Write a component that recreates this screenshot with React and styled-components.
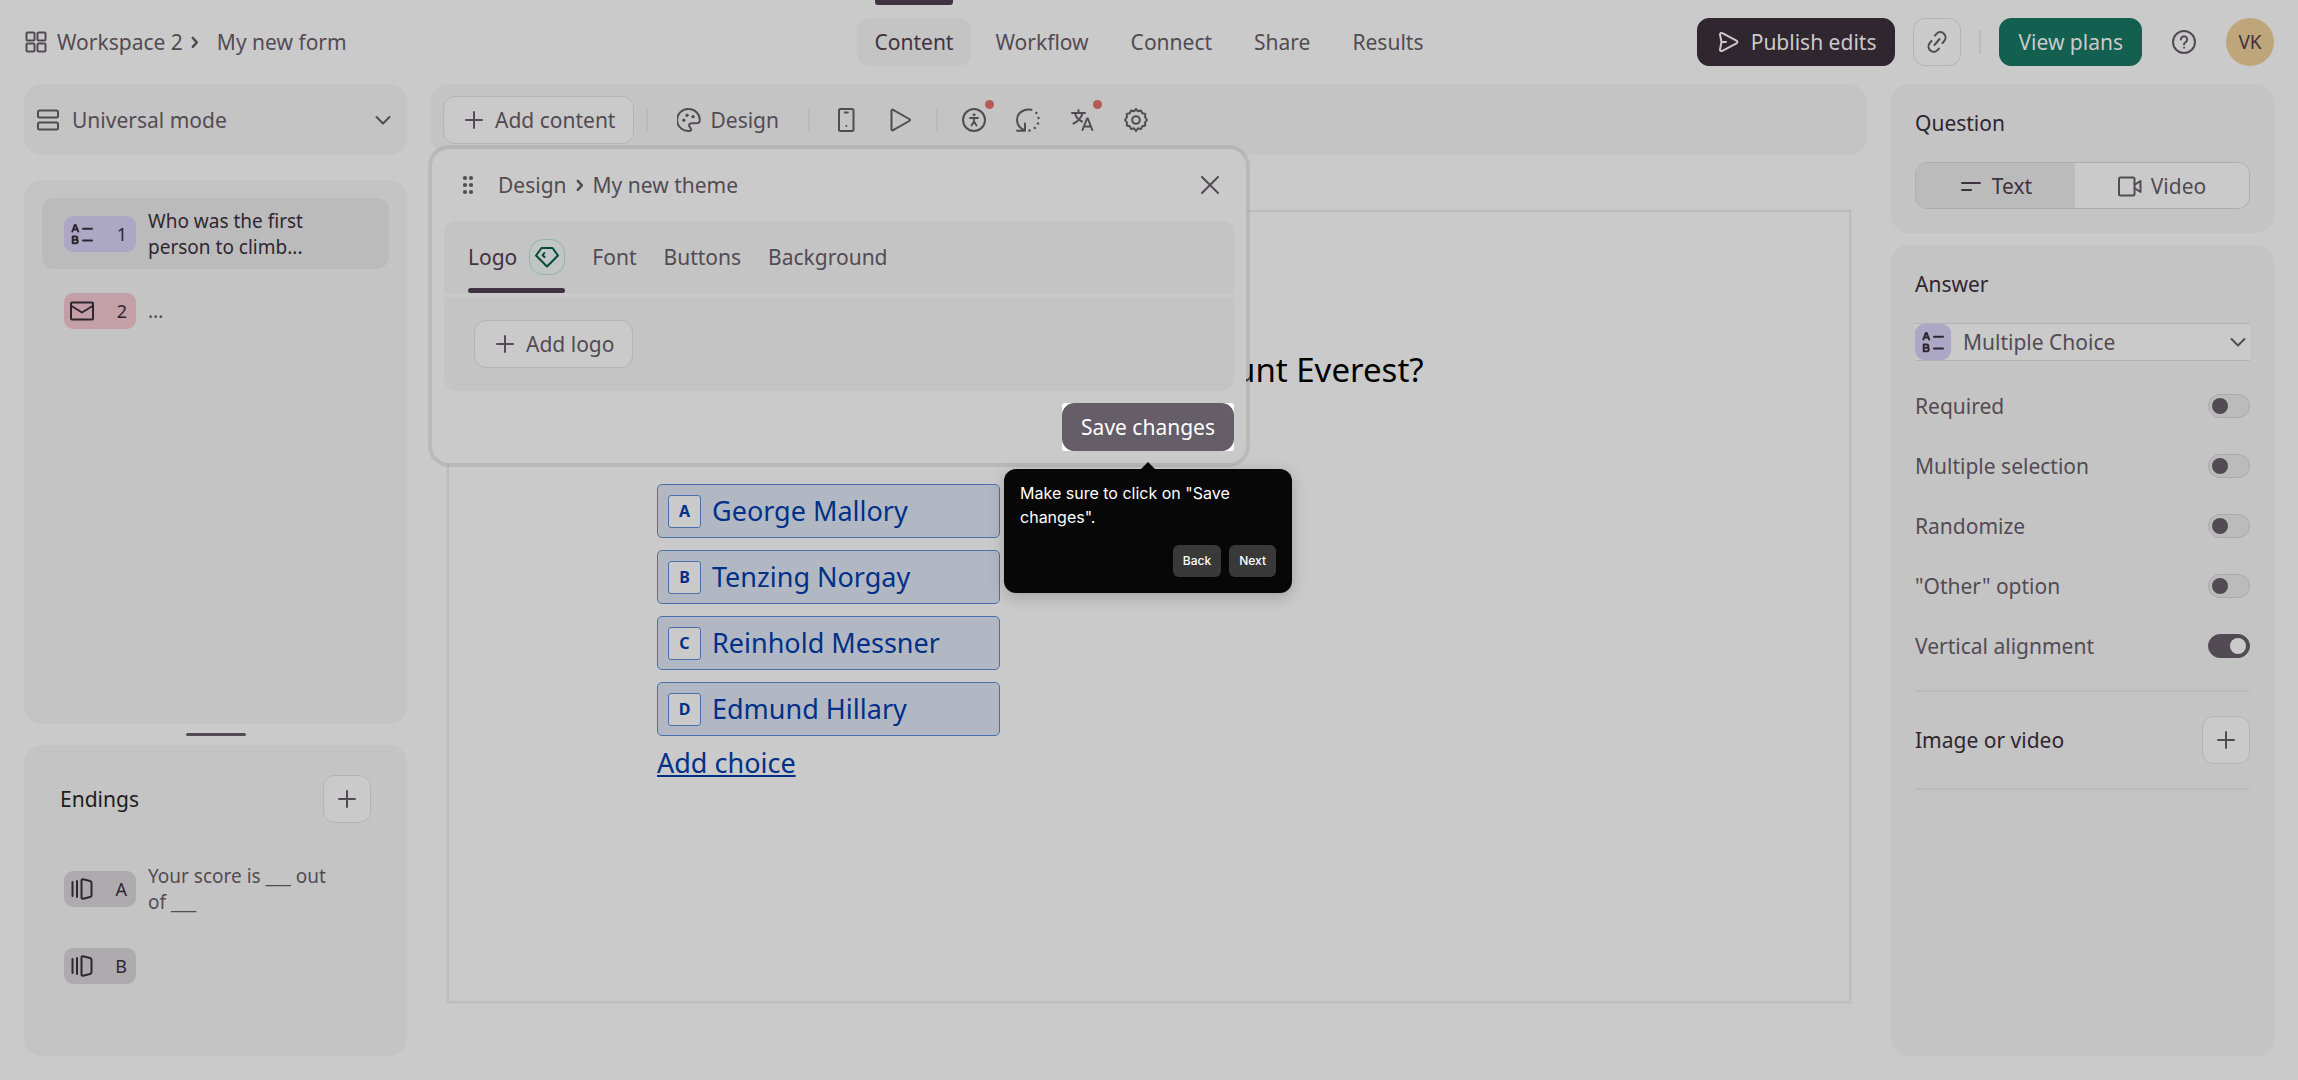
import React, { useState } from 'react'
import styled, { createGlobalStyle, css } from 'styled-components'

const colors = {
  page: '#cacaca',
  panel: '#c4c4c4',
  active: '#bbbbbb',
  line: '#b4b4b4',
  softLine: '#bbbbbb',
  text: '#534b54',
  dark: '#2f2630',
  strong: '#3f3241',
  blue: '#003087',
  blueLine: '#4c70ab',
}

const modes = ['Universal mode', 'Logic mode']
const answerTypes = ['Multiple Choice', 'Short Text', 'Email']
const navItems = ['Content', 'Workflow', 'Connect', 'Share', 'Results']
const choices = ['George Mallory', 'Tenzing Norgay', 'Reinhold Messner', 'Edmund Hillary']
const settings = [
  { id: 'required', label: 'Required', on: false },
  { id: 'multiple', label: 'Multiple selection', on: false },
  { id: 'randomize', label: 'Randomize', on: false },
  { id: 'other', label: '"Other" option', on: false },
  { id: 'vertical', label: 'Vertical alignment', on: true },
]

const Icon = ({ children, size = 24, width = 2 }) => (
  <Svg
    width={size}
    height={size}
    viewBox="0 0 24 24"
    fill="none"
    stroke="currentColor"
    strokeWidth={width}
    strokeLinecap="round"
    strokeLinejoin="round"
    aria-hidden="true"
  >
    {children}
  </Svg>
)

const GridIcon = () => (
  <Icon>
    <rect x="2.5" y="2.5" width="8" height="8" rx="1" />
    <rect x="13.5" y="2.5" width="8" height="8" rx="1" />
    <rect x="2.5" y="13.5" width="8" height="8" rx="1" />
    <rect x="13.5" y="13.5" width="8" height="8" rx="1" />
  </Icon>
)
const RowsIcon = () => (
  <Icon>
    <rect x="2" y="2.5" width="20" height="7" rx="1.5" />
    <rect x="2" y="14.5" width="20" height="7" rx="1.5" />
  </Icon>
)
const ChevronRight = () => (
  <Icon size={18} width={3.2}>
    <path d="M9 6.500l5.500 6-5.500 6" />
  </Icon>
)
const ChevronDown = () => (
  <Icon>
    <path d="M5.500 9l6.500 6.500L18.500 9" />
  </Icon>
)
const PlusIcon = () => (
  <Icon>
    <path d="M12 4v16M4 12h16" />
  </Icon>
)
const CloseIcon = () => (
  <Icon>
    <path d="M4 4l16 16M20 4L4 20" />
  </Icon>
)
const ChoiceIcon = () => (
  <Icon>
    <path d="M2.300 9.500L4.800 3h.9l2.500 6.500M3.400 7.600h3.700" />
    <path d="M2.700 14.500h3a1.500 1.500 0 0 1 0 3.300h-3zM2.700 17.800h3.400a1.600 1.600 0 0 1 0 3.400H2.700z" />
    <path d="M13 6.700h9M13 18.500h9" />
  </Icon>
)
const MailIcon = () => (
  <Icon>
    <rect x="1" y="3.500" width="22" height="17" rx="1" />
    <path d="M1.500 7L12 13.500 22.500 7" />
  </Icon>
)
const EndingIcon = () => (
  <Icon>
    <path d="M2.500 5v14M7 4v16M11.500 3.500c0-1 .5-1.400 1.500-1.200l7 1.700c1 .2 1.500.8 1.500 1.700v12.600c0 .9-.5 1.500-1.500 1.700l-7 1.700c-1 .2-1.500-.2-1.500-1.200z" />
  </Icon>
)
const SendIcon = () => (
  <Icon>
    <path d="M4 4.500c0-1.500 1-2 2.300-1.300l14.200 7.500c1.200.6 1.200 2 0 2.600L6.300 20.800C5 21.500 4 21 4 19.500L5.500 12zM5.500 12H10" />
  </Icon>
)
const LinkIcon = () => (
  <Icon>
    <path d="M10 5.500l1.500-1.700a5 5 0 0 1 7.500 0 5.500 5.500 0 0 1 0 7.500L17.500 13M6.500 11L5 12.700a5.500 5.500 0 0 0 0 7.500 5 5 0 0 0 7.500 0l1.500-1.700M9.500 15l5-6" />
  </Icon>
)
const HelpIcon = () => (
  <Icon>
    <circle cx="12" cy="12" r="11" />
    <path d="M8.800 9.500a3.200 3.200 0 1 1 5 2.700c-1.200.8-1.800 1.200-1.800 2.300" />
    <circle cx="12" cy="17.700" r=".6" fill="currentColor" strokeWidth="1" />
  </Icon>
)
const PaletteIcon = () => (
  <Icon>
    <path d="M12 1a11 11 0 1 0 1.500 21.700c1-.4.700-1.400.2-2.100l-1.200-2c-1-1.700-.2-3.300 1.800-3.300h4.900c2 0 3.600-1.200 3.600-3.600A11 11 0 0 0 12 1z" />
    <g fill="currentColor" strokeWidth="1">
      <circle cx="6.800" cy="12.300" r="1.200" />
      <circle cx="10" cy="7.300" r="1.200" />
      <circle cx="16" cy="8.700" r="1.200" />
    </g>
  </Icon>
)
const PhoneIcon = () => (
  <Icon>
    <rect x="5" y="1" width="14.500" height="22" rx="1.500" />
    <path d="M10.800 4.500h3" />
    <circle cx="12.200" cy="18" r=".5" fill="currentColor" strokeWidth="1" />
  </Icon>
)
const PlayIcon = () => (
  <Icon>
    <path d="M3.500 2.800c0-1 .8-1.500 1.700-1l16 9.200c1 .5 1 1.500 0 2l-16 9.200c-.9.500-1.700 0-1.700-1z" />
  </Icon>
)
const AccessIcon = () => (
  <Icon>
    <circle cx="12" cy="12" r="11" />
    <circle cx="12" cy="6.800" r="1" fill="currentColor" strokeWidth="1" />
    <path d="M8 10h8M12 10v4M12 13.500L9.500 17.500M12 13.500l2.500 4" strokeWidth="1.800" />
  </Icon>
)
const ReplayIcon = () => (
  <Icon>
    <path d="M15.500 1.800C8 .2 1 5 1 12c0 4.500 2.500 8 8 10.500M9 15.500v7.200H1" />
    <g fill="currentColor" stroke="none">
      <circle cx="20.300" cy="5" r="1.200" />
      <circle cx="22.500" cy="10" r="1.200" />
      <circle cx="22" cy="15.500" r="1.200" />
      <circle cx="18.800" cy="20" r="1.200" />
      <circle cx="13.500" cy="22.500" r="1.200" />
    </g>
  </Icon>
)
const TranslateIcon = () => (
  <Icon>
    <path d="M2 5h13M8.500 2v3M12.500 5.500C11 10 8 13.500 3.500 15.500M5 5.500c1 3.500 3.500 6.500 7 8M12.500 22l4.500-11.500h.8L22.300 22M14 18.500h6.800" />
  </Icon>
)
const GearIcon = () => (
  <Icon>
    <path d="M12 1l2 2.300 2.900-.9 1.400 2.800 3 .7-.3 3.100L23 12l-2 2.500.3 3-3 .8-1.400 2.800-2.900-.8L12 23l-2-2.700-2.900.8-1.400-2.800-3-.8.3-3L1 12l2-3-.3-3.100 3-.7 1.400-2.800 2.900.9z" />
    <circle cx="12" cy="12" r="3.800" />
  </Icon>
)
const TextIcon = () => (
  <Icon>
    <path d="M3 9h18M3 16h9" />
  </Icon>
)
const VideoIcon = () => (
  <Icon>
    <rect x="1" y="3.500" width="15.500" height="18" rx="1.500" />
    <path d="M17 10.500l5.500-3.500v11L17 14.500" />
  </Icon>
)
const GemIcon = () => (
  <Icon>
    <path d="M6.500 3h11L23 10.500 12 21.500 1 10.500zM9.300 8L7.600 10.300 9.500 12" />
  </Icon>
)
const DragIcon = () => (
  <Icon>
    <g fill="currentColor" stroke="none">
      {[5, 12, 19].map(y => (
        <React.Fragment key={y}>
          <circle cx="9" cy={y} r="2.100" />
          <circle cx="15" cy={y} r="2.100" />
        </React.Fragment>
      ))}
    </g>
  </Icon>
)

export default function App() {
  const [checked, setChecked] = useState(() =>
    Object.fromEntries(settings.map(s => [s.id, s.on]))
  )
  const toggle = id => setChecked(prev => ({ ...prev, [id]: !prev[id] }))

  return (
    <Page>
      <GlobalStyle />
      <Header>
        <Breadcrumb>
          <GridIcon />
          <Crumb href="#workspace">Workspace 2</Crumb>
          <ChevronRight />
          <FormName>My new form</FormName>
        </Breadcrumb>
        <Nav>
          {navItems.map((item, i) => (
            <NavLink key={item} href={`#${item.toLowerCase()}`} $active={i === 0}>
              {item}
            </NavLink>
          ))}
        </Nav>
        <Actions>
          <SolidButton $bg={colors.dark}>
            <SendIcon />
            Publish edits
          </SolidButton>
          <SquareButton aria-label="Copy link">
            <LinkIcon />
          </SquareButton>
          <Divider />
          <SolidButton $bg="#135f50">View plans</SolidButton>
          <IconButton aria-label="Help">
            <HelpIcon />
          </IconButton>
          <Avatar>VK</Avatar>
        </Actions>
      </Header>

      <Main>
        <Side>
          <ModePanel>
            <RowsIcon />
            <Select aria-label="Mode">
              {modes.map(m => (
                <option key={m}>{m}</option>
              ))}
            </Select>
            <ChevronDown />
          </ModePanel>
          <SlidePanel>
            <Slide $active>
              <Tag $bg="#ada7c6">
                <ChoiceIcon />
                <span>1</span>
              </Tag>
              <SlideText>Who was the first person to climb...</SlideText>
            </Slide>
            <Slide>
              <Tag $bg="#c39fa8">
                <MailIcon />
                <span>2</span>
              </Tag>
              <SlideText>...</SlideText>
            </Slide>
          </SlidePanel>
          <Resizer>
            <Handle />
          </Resizer>
          <EndingsPanel>
            <EndingsHeader>
              <EndingsTitle>Endings</EndingsTitle>
              <SquareButton aria-label="Add ending">
                <PlusIcon />
              </SquareButton>
            </EndingsHeader>
            <Slide>
              <Tag $bg="#aeabaf">
                <EndingIcon />
                <span>A</span>
              </Tag>
              <SlideText>Your score is ___ out of ___</SlideText>
            </Slide>
            <Slide>
              <Tag $bg="#aeabaf">
                <EndingIcon />
                <span>B</span>
              </Tag>
            </Slide>
          </EndingsPanel>
        </Side>

        <Center>
          <Toolbar>
            <OutlineButton>
              <PlusIcon />
              Add content
            </OutlineButton>
            <Divider />
            <PlainButton>
              <PaletteIcon />
              Design
            </PlainButton>
            <Divider />
            <ToolGroup>
              <IconButton aria-label="Mobile preview">
                <PhoneIcon />
              </IconButton>
              <IconButton aria-label="Play">
                <PlayIcon />
              </IconButton>
            </ToolGroup>
            <Divider />
            <ToolGroup>
              <IconButton aria-label="Accessibility">
                <AccessIcon />
                <Dot />
              </IconButton>
              <IconButton aria-label="Replay">
                <ReplayIcon />
              </IconButton>
              <IconButton aria-label="Translate">
                <TranslateIcon />
                <Dot />
              </IconButton>
              <IconButton aria-label="Settings">
                <GearIcon />
              </IconButton>
            </ToolGroup>
          </Toolbar>

          <Canvas>
            <QuestionBlock>
              <QuestionTitle>Who was the first person to climb Mount Everest?</QuestionTitle>
              <Choices>
                {choices.map((choice, i) => (
                  <Choice key={choice}>
                    <Key>{String.fromCharCode(65 + i)}</Key>
                    {choice}
                  </Choice>
                ))}
              </Choices>
              <AddChoice href="#add-choice">Add choice</AddChoice>
            </QuestionBlock>
          </Canvas>

          <Modal role="dialog" aria-label="Design">
            <ModalHeader>
              <DragIcon />
              <ModalPath>
                Design
                <ChevronRight />
                My new theme
              </ModalPath>
              <IconButton aria-label="Close">
                <CloseIcon />
              </IconButton>
            </ModalHeader>
            <ModalBody>
              <Tabs>
                <Tab $active>
                  Logo
                  <Gem>
                    <GemIcon />
                  </Gem>
                </Tab>
                <Tab>Font</Tab>
                <Tab>Buttons</Tab>
                <Tab>Background</Tab>
              </Tabs>
              <TabContent>
                <OutlineButton>
                  <PlusIcon />
                  Add logo
                </OutlineButton>
              </TabContent>
            </ModalBody>
            <ModalFooter>
              <Spotlight>
                <SolidButton $bg="#655d68" $color="#ffffff">
                  Save changes
                </SolidButton>
                <Tooltip>
                  <TooltipText>Make sure to click on "Save changes".</TooltipText>
                  <TooltipActions>
                    <TooltipButton>Back</TooltipButton>
                    <TooltipButton>Next</TooltipButton>
                  </TooltipActions>
                </Tooltip>
              </Spotlight>
            </ModalFooter>
          </Modal>
        </Center>

        <Side>
          <SettingsPanel>
            <PanelTitle>Question</PanelTitle>
            <Segmented>
              <Segment aria-pressed="true" $active>
                <TextIcon />
                Text
              </Segment>
              <Segment aria-pressed="false">
                <VideoIcon />
                Video
              </Segment>
            </Segmented>
          </SettingsPanel>
          <AnswerPanel>
            <PanelTitle>Answer</PanelTitle>
            <TypeSelect>
              <TypeIcon>
                <ChoiceIcon />
              </TypeIcon>
              <Select aria-label="Answer type">
                {answerTypes.map(t => (
                  <option key={t}>{t}</option>
                ))}
              </Select>
              <ChevronDown />
            </TypeSelect>
            <SettingList>
              {settings.map(s => (
                <Setting key={s.id} htmlFor={s.id}>
                  {s.label}
                  <Switch
                    id={s.id}
                    type="checkbox"
                    checked={checked[s.id]}
                    onChange={() => toggle(s.id)}
                  />
                </Setting>
              ))}
            </SettingList>
            <MediaRow>
              <PanelTitle>Image or video</PanelTitle>
              <SquareButton aria-label="Add image or video">
                <PlusIcon />
              </SquareButton>
            </MediaRow>
          </AnswerPanel>
        </Side>
      </Main>
    </Page>
  )
}

const GlobalStyle = createGlobalStyle`
  * {
    box-sizing: border-box;
  }
  body {
    margin: 0;
    background: ${colors.page};
    color: ${colors.text};
    font-family: 'Noto Sans', sans-serif;
    font-size: 21px;
    line-height: 30px;
  }
  button, select, input {
    font: inherit;
    color: inherit;
    margin: 0;
  }
  a {
    color: inherit;
    text-decoration: none;
  }
`

const Svg = styled.svg`
  display: block;
  flex: none;
`

const Page = styled.div`
  min-height: 100vh;
  display: flex;
  flex-direction: column;
`

const Header = styled.header`
  display: grid;
  grid-template-columns: 1fr auto 1fr;
  align-items: center;
  padding: 18px 24px;
`

const Breadcrumb = styled.div`
  display: flex;
  align-items: center;
  gap: 3px;
`

const Crumb = styled.a`
  margin-left: 6px;
`

const FormName = styled.span`
  margin-left: 10px;
`

const Nav = styled.nav`
  display: flex;
  gap: 6px;
`

const NavLink = styled.a`
  position: relative;
  padding: 9px 18px;
  border-radius: 12px;
  ${props =>
    props.$active &&
    css`
      background: ${colors.panel};
      color: ${colors.strong};
      &::before {
        content: '';
        position: absolute;
        top: -18px;
        left: 18px;
        right: 18px;
        height: 5px;
        border-radius: 0 0 3px 3px;
        background: ${colors.strong};
      }
    `}
`

const Actions = styled.div`
  display: flex;
  align-items: center;
  justify-content: flex-end;
  gap: 18px;
`

const buttonBase = css`
  display: flex;
  align-items: center;
  justify-content: center;
  gap: 9px;
  height: 48px;
  padding: 0 18px;
  border: 0;
  border-radius: 12px;
  background: none;
  white-space: nowrap;
  cursor: pointer;
`

const SolidButton = styled.button`
  ${buttonBase}
  gap: 11px;
  border: 1px solid ${props => props.$bg};
  background: ${props => props.$bg};
  color: ${props => props.$color || colors.page};
`

const OutlineButton = styled.button`
  ${buttonBase}
  border: 1px solid ${colors.line};
  background: ${colors.page};
`

const PlainButton = styled.button`
  ${buttonBase}
  padding: 0 17px;
`

const IconButton = styled.button`
  ${buttonBase}
  position: relative;
  width: 48px;
  padding: 0;
`

const SquareButton = styled(OutlineButton)`
  width: 48px;
  padding: 0;
`

const Divider = styled.span`
  flex: none;
  width: 2px;
  height: 24px;
  background: ${colors.softLine};
`

const Avatar = styled.div`
  display: flex;
  align-items: center;
  justify-content: center;
  width: 48px;
  height: 48px;
  border-radius: 50%;
  background: #bea57a;
  color: ${colors.strong};
  font-size: 19px;
`

const Main = styled.main`
  flex: 1;
  display: flex;
  gap: 24px;
  padding: 0 24px 24px;
`

const Side = styled.aside`
  flex: none;
  width: 383px;
  display: flex;
  flex-direction: column;
`

const Panel = styled.section`
  border-radius: 18px;
  background: ${colors.panel};
`

const ModePanel = styled(Panel)`
  display: flex;
  align-items: center;
  gap: 12px;
  height: 71px;
  padding: 0 12px;
`

const Select = styled.select`
  flex: 1;
  min-width: 0;
  padding: 0;
  border: 0;
  background: none;
  appearance: none;
`

const SlidePanel = styled(Panel)`
  flex: 1;
  display: flex;
  flex-direction: column;
  gap: 6px;
  margin-top: 25px;
  padding: 18px;
`

const Slide = styled.div`
  display: flex;
  align-items: center;
  gap: 12px;
  height: 71px;
  padding: 0 48px 0 22px;
  border-radius: 12px;
  ${props =>
    props.$active &&
    css`
      background: ${colors.active};
      color: ${colors.dark};
    `}
`

const Tag = styled.div`
  flex: none;
  display: flex;
  align-items: center;
  justify-content: space-between;
  width: 72px;
  height: 36px;
  padding: 0 9px 0 6px;
  border-radius: 9px;
  background: ${props => props.$bg};
  color: ${colors.dark};
  font-size: 18px;
`

const SlideText = styled.span`
  font-size: 19px;
  line-height: 26px;
`

const Resizer = styled.div`
  display: flex;
  align-items: center;
  justify-content: center;
  height: 21px;
`

const Handle = styled.span`
  width: 60px;
  height: 3px;
  border-radius: 2px;
  background: ${colors.text};
`

const EndingsPanel = styled(Panel)`
  display: flex;
  flex-direction: column;
  gap: 6px;
  padding: 30px 18px 55px;
`

const EndingsHeader = styled.div`
  display: flex;
  align-items: center;
  justify-content: space-between;
  padding: 0 18px 24px;
`

const PanelTitle = styled.h2`
  margin: 0;
  color: ${colors.dark};
  font-size: 21px;
  font-weight: 400;
`

const EndingsTitle = styled(PanelTitle)`
  color: #1c1c1c;
`

const Center = styled.div`
  position: relative;
  flex: 1;
  min-width: 0;
  display: flex;
  flex-direction: column;
`

const Toolbar = styled(Panel)`
  display: flex;
  align-items: center;
  gap: 12px;
  height: 71px;
  padding: 0 12px;
`

const ToolGroup = styled.div`
  display: flex;
  gap: 6px;
`

const Dot = styled.span`
  position: absolute;
  top: 4px;
  right: 4px;
  width: 9px;
  height: 9px;
  border-radius: 50%;
  background: #b65a58;
`

const Canvas = styled.section`
  flex: 1;
  margin: 55px 16px 53px;
  padding: 136px 24px 24px;
  border: 2px solid #bdbdbd;
  box-shadow: 0 0 0 1px #c6c6c6;
`

const QuestionBlock = styled.div`
  max-width: 984px;
  margin: 0 auto;
  display: flex;
  flex-direction: column;
  align-items: flex-start;
`

const QuestionTitle = styled.h1`
  margin: 0;
  color: #000000;
  font-size: 33px;
  font-weight: 400;
  line-height: 44px;
`

const Choices = styled.div`
  display: flex;
  flex-direction: column;
  gap: 12px;
  margin-top: 92px;
`

const Choice = styled.button`
  display: flex;
  align-items: center;
  gap: 11px;
  min-width: 343px;
  height: 54px;
  padding: 0 10px;
  border: 1px solid ${colors.blueLine};
  border-radius: 5px;
  background: #b2b8c3;
  color: ${colors.blue};
  font-size: 27px;
  cursor: pointer;
`

const Key = styled.span`
  display: flex;
  align-items: center;
  justify-content: center;
  width: 33px;
  height: 33px;
  border: 1px solid ${colors.blueLine};
  border-radius: 3px;
  background: ${colors.page};
  font-size: 16px;
  font-weight: 700;
`

const AddChoice = styled.a`
  margin-top: 8px;
  color: ${colors.blue};
  font-size: 27px;
  line-height: 38px;
  text-decoration: underline;
`

const Modal = styled.div`
  position: absolute;
  top: 61px;
  left: -3px;
  width: 822px;
  border: 4px solid rgba(160, 160, 160, 0.4);
  border-radius: 21px;
  background: ${colors.page};
  background-clip: padding-box;
`

const ModalHeader = styled.div`
  display: flex;
  align-items: center;
  gap: 18px;
  height: 72px;
  padding: 0 12px 0 24px;
`

const ModalPath = styled.div`
  flex: 1;
  display: flex;
  align-items: center;
  gap: 4px;
`

const ModalBody = styled.div`
  margin: 0 12px;
  border-radius: 12px;
  background: ${colors.panel};
`

const Tabs = styled.div`
  display: flex;
  gap: 27px;
  height: 76px;
  padding: 0 24px;
  border-bottom: 4px solid #c9c9c9;
`

const Tab = styled.button`
  position: relative;
  display: flex;
  align-items: center;
  gap: 12px;
  padding: 0;
  border: 0;
  background: none;
  cursor: pointer;
  ${props =>
    props.$active &&
    css`
      color: ${colors.strong};
      &::after {
        content: '';
        position: absolute;
        left: 0;
        right: 0;
        bottom: 0;
        height: 5px;
        border-radius: 3px;
        background: ${colors.strong};
      }
    `}
`

const Gem = styled.span`
  display: flex;
  align-items: center;
  justify-content: center;
  width: 36px;
  height: 36px;
  border: 1px solid #93b3ab;
  border-radius: 14px;
  background: #bfc6c4;
  color: #03483b;
`

const TabContent = styled.div`
  display: flex;
  padding: 23px 30px;
`

const ModalFooter = styled.div`
  display: flex;
  justify-content: flex-end;
  padding: 12px;
`

const Spotlight = styled.div`
  position: relative;
  border-radius: 3px;
  background: #ffffff;
`

const Tooltip = styled.div`
  position: absolute;
  top: 66px;
  left: 50%;
  width: 288px;
  margin-left: -144px;
  padding: 12px 16px 16px;
  border-radius: 12px;
  background: #070707;
  box-shadow: 0 4px 16px rgba(0, 0, 0, 0.2);
  color: #ffffff;
  font-family: Inter, sans-serif;
  &::before {
    content: '';
    position: absolute;
    top: -7px;
    left: 137px;
    border: 7px solid transparent;
    border-top: 0;
    border-bottom-color: #070707;
  }
`

const TooltipText = styled.p`
  margin: 0 0 16px;
  font-size: 16px;
  line-height: 24px;
`

const TooltipActions = styled.div`
  display: flex;
  justify-content: flex-end;
  gap: 8px;
`

const TooltipButton = styled.button`
  height: 32px;
  padding: 0 10px;
  border: 0;
  border-radius: 6px;
  background: #393939;
  font-size: 12px;
  font-weight: 500;
  cursor: pointer;
`

const SettingsPanel = styled(Panel)`
  padding: 24px;
`

const Segmented = styled.div`
  display: flex;
  height: 47px;
  margin-top: 24px;
  border: 1px solid #adadad;
  border-radius: 12px;
  overflow: hidden;
`

const Segment = styled.button`
  flex: 1 1 auto;
  display: flex;
  align-items: center;
  justify-content: center;
  gap: 9px;
  padding: 0;
  border: 0;
  background: ${props => (props.$active ? colors.active : colors.page)};
  color: ${props => (props.$active ? colors.strong : colors.text)};
  cursor: pointer;
`

const AnswerPanel = styled(SettingsPanel)`
  flex: 1;
  margin-top: 12px;
`

const TypeSelect = styled.div`
  display: flex;
  align-items: center;
  gap: 12px;
  height: 38px;
  margin-top: 24px;
  border: solid ${colors.line};
  border-width: 1px 0;
  background: ${colors.page};
`

const TypeIcon = styled.span`
  display: flex;
  align-items: center;
  justify-content: center;
  width: 36px;
  height: 36px;
  border-radius: 9px;
  background: #ada7c6;
  color: ${colors.dark};
`

const SettingList = styled.div`
  padding: 15px 0 14px;
`

const Setting = styled.label`
  display: flex;
  align-items: center;
  justify-content: space-between;
  height: 60px;
`

const Switch = styled.input`
  appearance: none;
  display: flex;
  align-items: center;
  width: 42px;
  height: 24px;
  padding: 0 3px;
  border: 1px solid #a9a9a9;
  border-radius: 12px;
  background: ${colors.active};
  &::before {
    content: '';
    width: 16px;
    height: 16px;
    border-radius: 50%;
    background: ${colors.text};
  }
  &:checked {
    justify-content: flex-end;
    border-color: ${colors.text};
    background: ${colors.text};
  }
  &:checked::before {
    background: ${colors.page};
  }
`

const MediaRow = styled.div`
  display: flex;
  align-items: center;
  justify-content: space-between;
  padding: 24px 0;
  border: solid ${colors.softLine};
  border-width: 2px 0;
`
